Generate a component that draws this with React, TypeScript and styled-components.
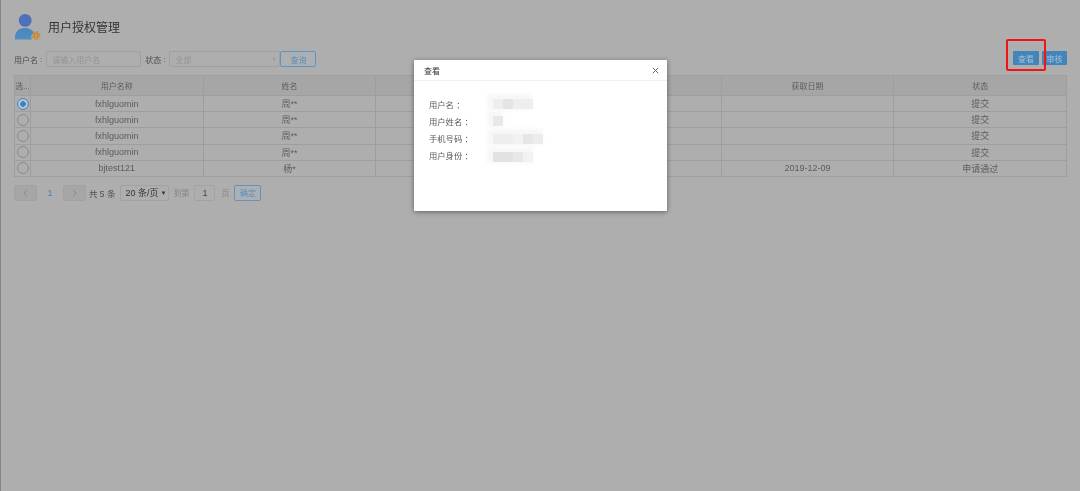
import styled, { createGlobalStyle } from "styled-components";

const GlobalStyle = createGlobalStyle`
	html,
	body {
		margin: 0;
		padding: 0;
		height: 100%;
		background: #aeaeae;
		font-family: "Liberation Sans", "Noto Sans CJK SC", sans-serif;
	}
	#root {
		height: 100%;
	}
`;

const Page = styled.div`
	position: relative;
	box-sizing: border-box;
	height: 491px;
	overflow: hidden;
	padding: 14px 13px 0 13px;
	border-left: 1px solid #868686;
	background: #aeaeae;
	color: #5c5c5c;
	font-size: 8px;
	filter: blur(0.55px);
`;

const Header = styled.div`
	display: flex;
	align-items: center;
	gap: 6px;
	height: 27px;
`;

const Title = styled.h1`
	margin: 0 0 3px;
	font-size: 12px;
	font-weight: 400;
	color: #333;
`;

const Toolbar = styled.div`
	display: flex;
	align-items: flex-start;
	height: 24px;
	margin-top: 10px;
`;

const Label = styled.span<{ $left?: number }>`
	display: flex;
	align-items: center;
	height: 16px;
	margin-left: ${(p) => p.$left ?? 0}px;
	color: #4f4f4f;
	white-space: nowrap;
`;

const Colon = styled.span`
	margin: 0 4px 0 2px;
`;

const Field = styled.div<{ $width: number }>`
	display: flex;
	align-items: center;
	justify-content: space-between;
	box-sizing: border-box;
	width: ${(p) => p.$width}px;
	height: 16px;
	padding: 0 3px 0 5px;
	border: 1px solid #a0a0a0;
	border-radius: 2px;
	color: #939393;
	i {
		font-style: normal;
		font-size: 5px;
	}
`;

const OutlineButton = styled.button<{ $width: number; $left?: number }>`
	box-sizing: border-box;
	width: ${(p) => p.$width}px;
	height: 16px;
	margin-left: ${(p) => p.$left ?? 0}px;
	padding: 0;
	border: 1px solid #5c95c4;
	border-radius: 2px;
	background: #adb0b2;
	color: #5a8db8;
	font: inherit;
`;

const ActionGroup = styled.div`
	display: flex;
	gap: 3px;
	margin-left: auto;
`;

const ActionButton = styled.button<{ $width: number }>`
	width: ${(p) => p.$width}px;
	height: 14px;
	padding: 0;
	border: none;
	border-radius: 1px;
	background: #4285bb;
	color: #a9bfd2;
	font: inherit;
`;

const Table = styled.table`
	width: 1053px;
	table-layout: fixed;
	border-collapse: collapse;
	border: 1px solid #9a9a9a;
	th,
	td {
		padding: 0;
		border: 1px solid #9e9e9e;
		text-align: center;
		overflow: hidden;
		white-space: nowrap;
		font-weight: 400;
	}
	th {
		height: 19px;
		background: #a6a6a6;
		font-size: 8px;
	}
	td {
		height: 15.2px;
		font-size: 9px;
	}
`;

const Radio = styled.span<{ $checked?: boolean }>`
	display: block;
	box-sizing: border-box;
	width: 12px;
	height: 12px;
	margin: 0 auto;
	border: 1px solid ${(p) => (p.$checked ? "#3f84bd" : "#8c8c8c")};
	border-radius: 50%;
	background: ${(p) =>
		p.$checked ? "radial-gradient(circle, #3f84bd 0 2.6px, #b6c4cf 3px)" : "transparent"};
`;

const Pager = styled.div`
	display: flex;
	align-items: center;
	height: 16px;
	margin-top: 8px;
`;

const PageArrow = styled.span`
	display: flex;
	align-items: center;
	justify-content: center;
	box-sizing: border-box;
	width: 23px;
	height: 16px;
	border: 1px solid #a2a2a2;
	border-radius: 2px;
	background: #a6a6a6;
	svg {
		display: block;
	}
`;

const PageNumber = styled.span`
	width: 26px;
	text-align: center;
	color: #4a7fae;
	font-size: 9px;
`;

const PagerText = styled.span<{ $muted?: boolean; $left: number }>`
	margin-left: ${(p) => p.$left}px;
	color: ${(p) => (p.$muted ? "#858585" : "#4f4f4f")};
	white-space: nowrap;
	font-size: ${(p) => (p.$muted ? 8 : 8.5)}px;
`;

const SizeSelect = styled.span`
	display: flex;
	align-items: center;
	justify-content: space-between;
	box-sizing: border-box;
	width: 49px;
	height: 16px;
	margin-left: 5px;
	padding: 0 2px 0 4px;
	border: 1px solid #a2a2a2;
	border-radius: 2px;
	color: #333;
	font-size: 9px;
	i {
		font-style: normal;
		font-size: 6px;
	}
`;

const PageInput = styled.span`
	box-sizing: border-box;
	width: 21px;
	height: 16px;
	margin-left: 5px;
	border: 1px solid #a2a2a2;
	border-radius: 2px;
	color: #444;
	font-size: 9px;
	line-height: 14px;
	text-align: center;
`;

const Modal = styled.div`
	position: absolute;
	left: 413px;
	top: 60px;
	width: 253px;
	height: 151px;
	background: #fff;
	border-radius: 1px;
	box-shadow: 0 1px 5px rgba(0, 0, 0, 0.45);
`;

const ModalHeader = styled.div`
	display: flex;
	align-items: center;
	justify-content: space-between;
	height: 20px;
	padding: 0 8px 0 10px;
	border-bottom: 1px solid #f0f0f0;
	color: #333;
	svg {
		display: block;
	}
`;

const ModalBody = styled.div`
	display: flex;
	flex-direction: column;
	padding: 14px 0 0 15px;
`;

const InfoRow = styled.div`
	display: flex;
	align-items: center;
	height: 17.2px;
	color: #5a5a5a;
	font-size: 8.3px;
`;

const InfoLabel = styled.span`
	width: 64px;
	flex: none;
`;

const Mosaic = styled.div<{ $offset: number }>`
	display: flex;
	margin-top: ${(p) => p.$offset}px;
	background: #f4f4f4;
	box-shadow: -3px -2px 4px 3px #f7f7f7;
	filter: blur(0.7px);
`;

const MosaicCell = styled.span<{ $shade: number }>`
	width: 10px;
	height: 10px;
	background: ${(p) => `rgb(${p.$shade}, ${p.$shade}, ${p.$shade})`};
`;

const Callout = styled.div`
	position: absolute;
	left: 1005px;
	top: 39px;
	box-sizing: border-box;
	width: 40px;
	height: 32px;
	border: 2px solid #f01414;
	border-radius: 2px;
`;

const columns = ["用户名称", "姓名", "手机号码", "用户身份", "获取日期", "状态"];

const rows = [
	{ user: "fxhlguomin", name: "周**", date: "", status: "提交", checked: true },
	{ user: "fxhlguomin", name: "周**", date: "", status: "提交" },
	{ user: "fxhlguomin", name: "周**", date: "", status: "提交" },
	{ user: "fxhlguomin", name: "周**", date: "", status: "提交" },
	{ user: "bjtest121", name: "杨*", date: "2019-12-09", status: "申请通过" },
];

const details = [
	{ label: "用户名 ：", cells: [238, 228, 238, 238], offset: 1 },
	{ label: "用户姓名 ：", cells: [232], offset: 0 },
	{ label: "手机号码 ：", cells: [238, 238, 242, 230, 236], offset: 2 },
	{ label: "用户身份 ：", cells: [226, 226, 232, 242], offset: 3 },
];

const UserIcon = () => (
	<svg width="28" height="27" viewBox="0 0 28 27">
		<defs>
			<linearGradient id="body" x1="0" y1="0" x2="0" y2="1">
				<stop offset="0" stopColor="#4c86ba" />
				<stop offset="1" stopColor="#4b8fc6" />
			</linearGradient>
		</defs>
		<circle cx="11.200" cy="6.400" r="6.400" fill="#4e72ba" />
		<path d="M1 25.500c-.6-7 3-11.500 10-11.500 4.500 0 7.500 2 9 5-2.500 1-3.500 4-2 6.500z" fill="url(#body)" />
		<circle cx="22" cy="21.500" r="2" fill="none" stroke="#c98a34" strokeWidth="2" />
		<circle cx="22" cy="21.500" r="3.800" fill="none" stroke="#c98a34" strokeWidth="1.300" strokeDasharray="1.600 1.400" />
	</svg>
);

const Chevron = ({ flip }: { flip?: boolean }) => (
	<svg width="5" height="8" viewBox="0 0 5 8">
		<path d={flip ? "M1 .500l3 3.500-3 3.500" : "M4 .500L1 4l3 3.500"} fill="none" stroke="#8a8a8a" />
	</svg>
);

export default function App() {
	return (
		<Page>
			<GlobalStyle />
			<Header>
				<UserIcon />
				<Title>用户授权管理</Title>
			</Header>
			<Toolbar>
				<Label>
					用户名
					<Colon>:</Colon>
				</Label>
				<Field $width={95}>请输入用户名</Field>
				<Label $left={4}>
					状态
					<Colon>:</Colon>
				</Label>
				<Field $width={111}>
					全部
					<i>▾</i>
				</Field>
				<OutlineButton $width={36}>查询</OutlineButton>
				<ActionGroup>
					<ActionButton $width={26}>查看</ActionButton>
					<ActionButton $width={25}>审核</ActionButton>
				</ActionGroup>
			</Toolbar>
			<Table>
				<colgroup>
					<col width={16} />
					{columns.map((column) => (
						<col key={column} />
					))}
				</colgroup>
				<thead>
					<tr>
						<th>选...</th>
						{columns.map((column) => (
							<th key={column}>{column}</th>
						))}
					</tr>
				</thead>
				<tbody>
					{rows.map((row, index) => (
						<tr key={index}>
							<td>
								<Radio $checked={row.checked} />
							</td>
							<td>{row.user}</td>
							<td>{row.name}</td>
							<td></td>
							<td></td>
							<td>{row.date}</td>
							<td>{row.status}</td>
						</tr>
					))}
				</tbody>
			</Table>
			<Pager>
				<PageArrow>
					<Chevron />
				</PageArrow>
				<PageNumber>1</PageNumber>
				<PageArrow>
					<Chevron flip />
				</PageArrow>
				<PagerText $left={3}>共 5 条</PagerText>
				<SizeSelect>
					20 条/页<i>▼</i>
				</SizeSelect>
				<PagerText $muted $left={4}>到第</PagerText>
				<PageInput>1</PageInput>
				<PagerText $muted $left={6}>页</PagerText>
				<OutlineButton $width={27} $left={5}>确定</OutlineButton>
			</Pager>
			<Modal>
				<ModalHeader>
					查看
					<svg width="7" height="7" viewBox="0 0 7 7">
						<path d="M.8.800l5.400 5.400M6.200.800L.8 6.200" stroke="#666" />
					</svg>
				</ModalHeader>
				<ModalBody>
					{details.map((item) => (
						<InfoRow key={item.label}>
							<InfoLabel>{item.label}</InfoLabel>
							<Mosaic $offset={item.offset}>
								{item.cells.map((shade, index) => (
									<MosaicCell key={index} $shade={shade} />
								))}
							</Mosaic>
						</InfoRow>
					))}
				</ModalBody>
			</Modal>
			<Callout />
		</Page>
	);
}
